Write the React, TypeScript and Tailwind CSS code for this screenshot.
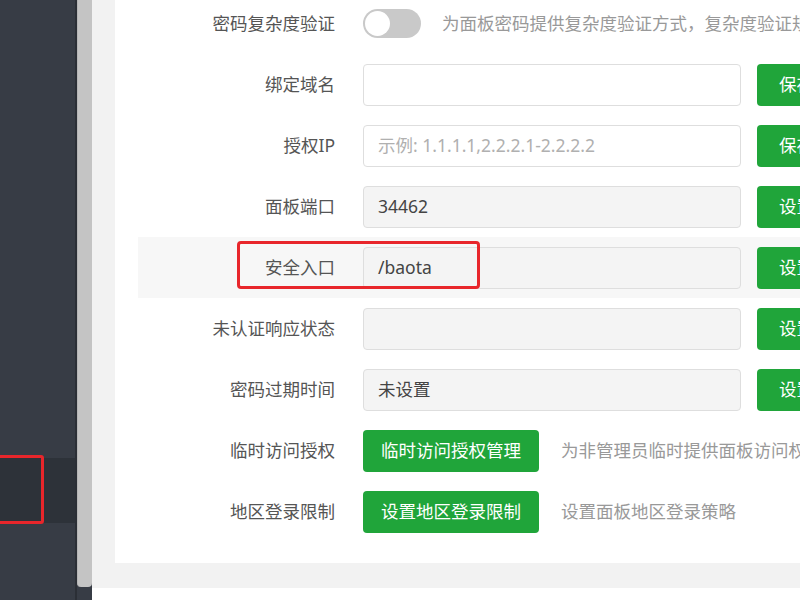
import React from "react";

type Row = {
  label: string;
  kind: "input" | "readonly" | "toggle" | "action";
  value?: string;
  placeholder?: string;
  btn?: string;
  desc?: string;
  mark?: boolean;
};

const rows: Row[] = [
  { label: "密码复杂度验证", kind: "toggle", desc: "为面板密码提供复杂度验证方式，复杂度验证规则" },
  { label: "绑定域名", kind: "input", btn: "保存" },
  { label: "授权IP", kind: "input", placeholder: "示例: 1.1.1.1,2.2.2.1-2.2.2.2", btn: "保存" },
  { label: "面板端口", kind: "readonly", value: "34462", btn: "设置" },
  { label: "安全入口", kind: "readonly", value: "/baota", btn: "设置", mark: true },
  { label: "未认证响应状态", kind: "readonly", value: "", btn: "设置" },
  { label: "密码过期时间", kind: "readonly", value: "未设置", btn: "设置" },
  { label: "临时访问授权", kind: "action", btn: "临时访问授权管理", desc: "为非管理员临时提供面板访问权限" },
  { label: "地区登录限制", kind: "action", btn: "设置地区登录限制", desc: "设置面板地区登录策略" },
];

function SettingRow({ r }: { r: Row }) {
  return (
    <div
      className={
        "relative flex items-center h-[61px] " + (r.mark ? "bg-[#f7f7f7]" : "")
      }
    >
      <div className="w-[197px] shrink-0 text-right text-[#555]">{r.label}</div>

      {r.kind === "toggle" && (
        <>
          <div className="ml-[28px] w-[58px] h-[29px] rounded-full bg-[#c9c9c9] p-[2px] shrink-0">
            <div className="w-[25px] h-[25px] rounded-full bg-white" />
          </div>
          <div className="ml-[21px] whitespace-nowrap text-[#999]">{r.desc}</div>
        </>
      )}

      {(r.kind === "input" || r.kind === "readonly") && (
        <>
          <div
            className={
              "ml-[28px] w-[378px] h-[42px] shrink-0 rounded-[4px] border border-[#dedede] px-[14px] flex items-center " +
              (r.kind === "readonly" ? "bg-[#f4f4f4] text-[#444]" : "bg-white")
            }
          >
            {r.value ? (
              <span>{r.value}</span>
            ) : r.placeholder ? (
              <span className="text-[#b0b0b0]">{r.placeholder}</span>
            ) : null}
          </div>
          <button className="ml-[16px] h-[42px] shrink-0 rounded-[4px] bg-[#20a53a] px-[22px] text-white whitespace-nowrap">
            {r.btn}
          </button>
        </>
      )}

      {r.kind === "action" && (
        <>
          <button className="ml-[28px] w-[176px] h-[42px] shrink-0 rounded-[4px] bg-[#20a53a] text-white whitespace-nowrap">
            {r.btn}
          </button>
          <div className="ml-[22px] whitespace-nowrap text-[#999]">{r.desc}</div>
        </>
      )}

      {r.mark && (
        <div className="absolute left-[99px] top-[4px] w-[243px] h-[48px] rounded-[4px] border-[3px] border-[#e8262b]" />
      )}
    </div>
  );
}

export default function App() {
  return (
    <div
      className="flex h-[600px] w-[800px] overflow-hidden text-[17.5px]"
      style={{ fontFamily: '"Noto Sans", "Noto Sans CJK SC", sans-serif' }}
    >
      {/* sidebar */}
      <div className="relative w-[77px] shrink-0 bg-[#373c45] border-r-2 border-[#2b2f36] flex flex-col">
        <div className="h-[458px]" />
        <div className="h-[65px] bg-[#2d3239]" />
        <div className="absolute -left-[4px] top-[455px] w-[48px] h-[69px] rounded-[3px] border-[3px] border-[#e8262b]" />
      </div>

      {/* scrollbar */}
      <div className="w-[15px] shrink-0 bg-[#373c45] flex flex-col">
        <div className="h-[587px] bg-[#c4c4c4] border-l border-[#b5b5b5] rounded-b-[4px]" />
      </div>

      {/* content */}
      <div className="flex-1 flex flex-col">
        <div className="flex h-[588px] bg-[#f2f2f2] pl-[23px]">
          <div className="flex-1 h-[563px] bg-white pl-[23px] overflow-hidden">
            <div className="-mt-[7px]">
              {rows.map((r) => (
                <SettingRow key={r.label} r={r} />
              ))}
            </div>
          </div>
        </div>
        <div className="flex-1 bg-white" />
      </div>
    </div>
  );
}
